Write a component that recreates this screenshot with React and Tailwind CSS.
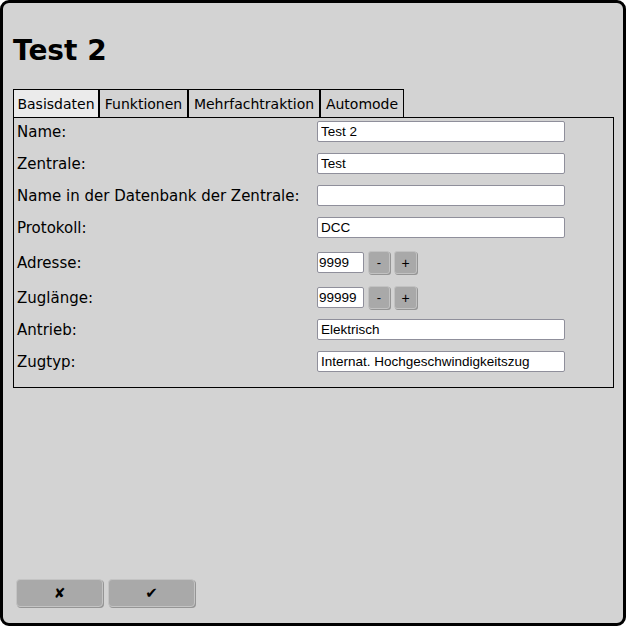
import { useState } from "react";

const tabs = [
  { label: "Basisdaten", width: "w-[86px]" },
  { label: "Funktionen", width: "w-[89px]" },
  { label: "Mehrfachtraktion", width: "w-[132px]" },
  { label: "Automode", width: "w-[84px]" },
];

const TextField = ({ value }) => (
  <input
    type="text"
    defaultValue={value}
    className="w-[248px] h-[21px] bg-white border border-[#8f8f9b] rounded-[2px] px-[3px] text-[13.5px] text-black outline-none font-['Liberation_Sans',sans-serif]"
  />
);

const NumberField = ({ value }) => (
  <div className="flex items-center">
    <input
      type="text"
      defaultValue={value}
      className="w-[47px] h-[21px] bg-white border border-[#8f8f9b] rounded-[2px] px-[1px] text-[13.5px] text-black outline-none font-['Liberation_Sans',sans-serif]"
    />
    <button className="ml-[4px] w-[22px] h-[23px] bg-[#a9a9a9] border border-[#c2c2c2] rounded-[3px] shadow-[1px_1px_0_#959595] text-[13px] leading-none text-black font-['Liberation_Sans',sans-serif]">
      -
    </button>
    <button className="ml-[4px] w-[23px] h-[23px] bg-[#a9a9a9] border border-[#c2c2c2] rounded-[3px] shadow-[1px_1px_0_#959595] text-[14px] leading-none text-black font-['Liberation_Sans',sans-serif]">
      +
    </button>
  </div>
);

const App = () => {
  const [active, setActive] = useState(0);

  const rows = [
    { label: "Name:", field: <TextField value="Test 2" /> },
    { label: "Zentrale:", field: <TextField value="Test" /> },
    { label: "Name in der Datenbank der Zentrale:", field: <TextField value="" /> },
    { label: "Protokoll:", field: <TextField value="DCC" /> },
    { label: "Adresse:", field: <NumberField value="9999" />, extra: "mt-[2px] mb-[1px]" },
    { label: "Zuglänge:", field: <NumberField value="99999" />, extra: "-mb-px" },
    { label: "Antrieb:", field: <TextField value="Elektrisch" /> },
    { label: "Zugtyp:", field: <TextField value="Internat. Hochgeschwindigkeitszug" /> },
  ];

  return (
    <div className="w-[626px] h-[626px] bg-[#d3d3d3] border-[3px] border-black rounded-[9px] flex flex-col font-['DejaVu_Sans',sans-serif] text-black">
      {/* Titel */}
      <h1 className="pl-[10px] pt-[32px] text-[28px] leading-[32px] font-bold">Test 2</h1>

      {/* Tabs */}
      <div className="mt-[22px] ml-[10px] flex">
        {tabs.map((tab, i) => (
          <button
            key={tab.label}
            onClick={() => setActive(i)}
            className={`${tab.width} h-[28px] pt-[1px] border-t border-l border-r border-black text-[14px] leading-none ${
              active === i ? "bg-[#ebebeb]" : "bg-[#d3d3d3]"
            }`}
          >
            {tab.label}
          </button>
        ))}
      </div>

      {/* Inhalt */}
      <div className="ml-[10px] w-[601px] h-[271px] border border-black flex flex-col gap-[11px] pt-[3px]">
        {rows.map((row) => (
          <div key={row.label} className={`flex items-center ${row.extra || ""}`}>
            <div className="w-[303px] pl-[3px] pt-[2px] text-[15px] leading-none">{row.label}</div>
            {row.field}
          </div>
        ))}
      </div>

      {/* Aktionen */}
      <div className="mt-auto pl-[13px] pb-[16px] flex gap-[5px]">
        <button className="w-[87px] h-[28px] bg-[#a9a9a9] border border-[#c4c4c4] rounded-[4px] shadow-[1px_1px_0_#959595] text-[14px] font-bold leading-none">
          ✘
        </button>
        <button className="w-[87px] h-[28px] bg-[#a9a9a9] border border-[#c4c4c4] rounded-[4px] shadow-[1px_1px_0_#959595] text-[15px] font-bold leading-none">
          ✔
        </button>
      </div>
    </div>
  );
};

export default App;
